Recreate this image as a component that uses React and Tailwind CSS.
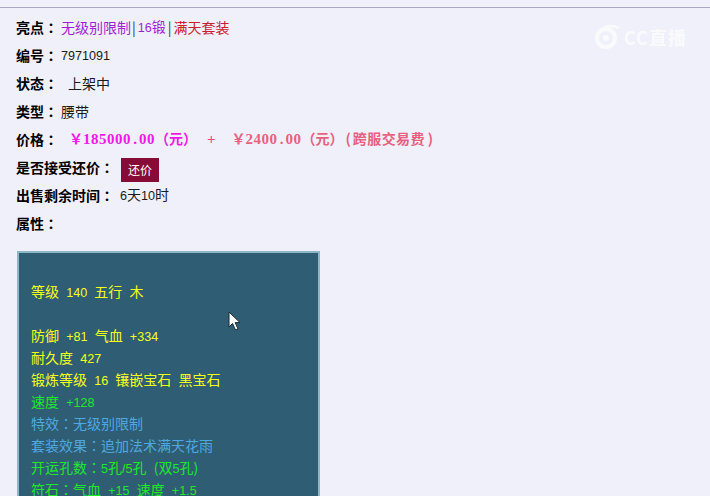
const cjk = { fontFamily: '"Noto Sans CJK SC", "Noto Sans", sans-serif' };

function L({ children }) {
  return <span className="font-['Liberation_Sans',sans-serif] text-[12.6px]">{children}</span>;
}

function P({ children }) {
  return <span className="font-['Liberation_Serif',serif] text-[15px] tracking-[0.5px]">{children}</span>;
}

const Dot = () => (
  <span className="inline-block w-2 text-center font-['Liberation_Serif',serif] text-[15px]">.</span>
);

function Row({ label, children }) {
  return (
    <div className="flex h-7 items-center pb-[2px]">
      <span className="font-bold text-black">
        {label}
        <span className="font-['Noto_Sans_CJK_TC',sans-serif]">：</span>
      </span>
      {children}
    </div>
  );
}

function Line({ color = "text-[#f4ff1e]", children }) {
  return <div className={`h-[22px] leading-[18px] whitespace-pre [word-spacing:4px] ${color}`}>{children}</div>;
}

const TC = ({ children }) => <span className="font-['Noto_Sans_CJK_TC',sans-serif]">{children}</span>;

export default function App() {
  return (
    <div style={cjk} className="relative h-[496px] w-[710px] overflow-hidden bg-[#f0f0fb] text-[14px] text-[#1a1a1a]">
      <div className="h-[14px]">
        <div className="h-[8px] border-b border-[#a8a8c4]" />
      </div>
      <div className="pl-4">
        <Row label="亮点">
          <span className="ml-[3px] text-[#a01fd0]">无级别限制</span>
          <span className="ml-[1px] mr-[2px] text-[#333]">|</span>
          <span className="text-[#a01fd0]"><L>16</L>锻</span>
          <span className="mx-[2px] text-[#333]">|</span>
          <span className="text-[#c82030]">满天套装</span>
        </Row>
        <Row label="编号">
          <span className="ml-[3px]"><L>7971091</L></span>
        </Row>
        <Row label="状态">
          <span className="ml-[10px]">上架中</span>
        </Row>
        <Row label="类型">
          <span className="ml-[3px]">腰带</span>
        </Row>
        <Row label="价格">
          <span className="ml-[11px] whitespace-pre font-bold text-[#f516e8]">
            ￥<P>185000</P><Dot /><P>00</P>（元）
          </span>
          <span className="ml-[10px] font-['Liberation_Serif',serif] text-[15px] font-bold text-[#f0488c]">+</span>
          <span className="ml-[16px] whitespace-pre font-bold text-[#e8607f]">
            ￥<P>2400</P><Dot /><P>00</P>（元）
            <span className="mx-[2px]">(</span>
            <span className="tracking-[0.4px]">跨服交易费</span>
            <span className="ml-[3px]">)</span>
          </span>
        </Row>
        <Row label="是否接受还价">
          <span className="ml-[7px] mb-[-2px] flex h-6 w-[38px] items-center justify-center self-end bg-[#860b36] text-[12px] text-white">还价</span>
        </Row>
        <Row label="出售剩余时间">
          <span className="ml-[6px]"><L>6</L>天<L>10</L>时</span>
        </Row>
        <Row label="属性" />
      </div>
      <div className="ml-[17px] mt-[13px] w-[303px] border-2 border-[#8fb6c6] bg-[#2f5d73] px-3 pt-[29px] text-[14px]">
        <Line>等级 <L>140</L> 五行 木</Line>
        <Line> </Line>
        <Line>防御 <L>+81</L> 气血 <L>+334</L></Line>
        <Line>耐久度 <L>427</L></Line>
        <Line>锻炼等级 <L>16</L> 镶嵌宝石 黑宝石</Line>
        <Line color="text-[#1fe82a]">速度 <L>+128</L></Line>
        <Line color="text-[#4fa8e0]">特效<TC>：</TC>无级别限制</Line>
        <Line color="text-[#4fa8e0]">套装效果<TC>：</TC>追加法术满天花雨</Line>
        <Line color="text-[#1fe82a]">开运孔数<TC>：</TC><L>5</L>孔<L>/5</L>孔 (双<L>5</L>孔)</Line>
        <Line color="text-[#1fe82a]">符石<TC>：</TC>气血 <L>+15</L> 速度 <L>+1.5</L></Line>
      </div>

      <svg className="absolute left-[228px] top-[311px]" width="14" height="21" viewBox="0 0 14 21">
        <path d="M1 1 L1 16 L4.5 12.5 L7.5 19 L10 18 L7.2 11.6 L12 11.6 Z" fill="#ffffff" stroke="#1c2a33" strokeWidth="1" />
      </svg>

      <div className="absolute left-[593px] top-[24px] flex items-center text-white opacity-70 blur-[0.5px]">
        <svg width="30" height="26" viewBox="0 0 30 26">
          <circle cx="13" cy="14" r="9" fill="none" stroke="#ffffff" strokeWidth="4" />
          <path d="M10 4 Q18 0 26 4" fill="none" stroke="#ffffff" strokeWidth="2.5" />
          <circle cx="13" cy="14" r="3" fill="#ffffff" />
        </svg>
        <span className="ml-[1px] text-[18px] leading-none font-bold tracking-[1px]">CC直播</span>
      </div>
    </div>
  );
}
